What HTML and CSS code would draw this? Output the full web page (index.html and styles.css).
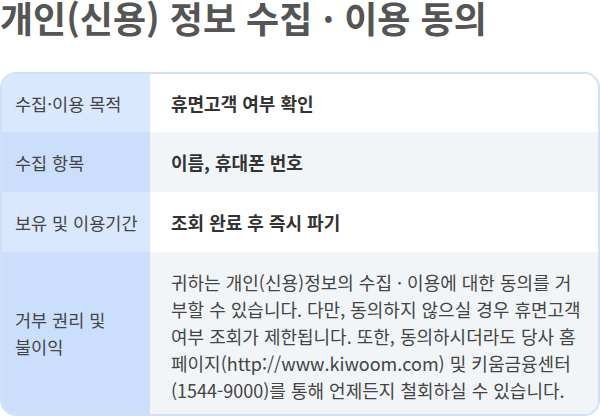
FILE: index.html
```html
<!DOCTYPE html>
<html lang="ko">
<head>
<meta charset="utf-8">
<link rel="stylesheet" href="styles.css">
</head>
<body>
<h1 class="title">개인(신용) 정보 수집 · 이용 동의</h1>
<div class="table">
  <div class="label odd">수집·이용 목적</div>
  <div class="value odd">휴면고객 여부 확인</div>
  <div class="label even">수집 항목</div>
  <div class="value even">이름, 휴대폰 번호</div>
  <div class="label odd">보유 및 이용기간</div>
  <div class="value odd">조회 완료 후 즉시 파기</div>
  <div class="label even">거부 권리 및<br>불이익</div>
  <div class="value even para">귀하는 개인(신용)정보의 수집 · 이용에 대한 동의를 거부할 수 있습니다. 다만, 동의하지 않으실 경우 휴면고객 여부 조회가 제한됩니다. 또한, 동의하시더라도 당사 홈페이지(http://www.kiwoom.com) 및 키움금융센터(1544-9000)를 통해 언제든지 철회하실 수 있습니다.</div>
</div>
</body>
</html>
```
FILE: styles.css
```css
html, body {
  margin: 0;
  padding: 0;
  background: #ffffff;
}
body {
  font-family: "Noto Sans CJK KR", "Noto Sans", sans-serif;
  width: 600px;
}
.title {
  margin: 0 0 38px 0;
  font-size: 36px;
  line-height: 34px;
  font-weight: 700;
  color: #555555;
  letter-spacing: 0;
  white-space: nowrap;
}
.table {
  display: grid;
  grid-template-columns: 148px 1fr;
  grid-template-rows: 58px 60px 60px 162px;
  border: 2px solid #cfe0fb;
  border-radius: 16px;
  overflow: hidden;
  height: 340px;
}
.label {
  display: flex;
  align-items: center;
  padding-left: 13px;
  font-size: 17.5px;
  line-height: 27px;
  color: #444444;
}
.label.odd { background: #dae8fd; }
.label.even { background: #cbdffd; }
.value {
  display: flex;
  align-items: center;
  padding-left: 21px;
  padding-right: 15px;
  font-size: 18px;
  font-weight: 700;
  color: #333333;
}
.value.odd { background: #ffffff; }
.value.even { background: #f2f5f7; }
.value.para {
  display: block;
  padding-top: 17px;
  font-weight: 400;
  font-size: 18px;
  line-height: 27px;
  color: #444444;
  word-break: break-all;
}
```
